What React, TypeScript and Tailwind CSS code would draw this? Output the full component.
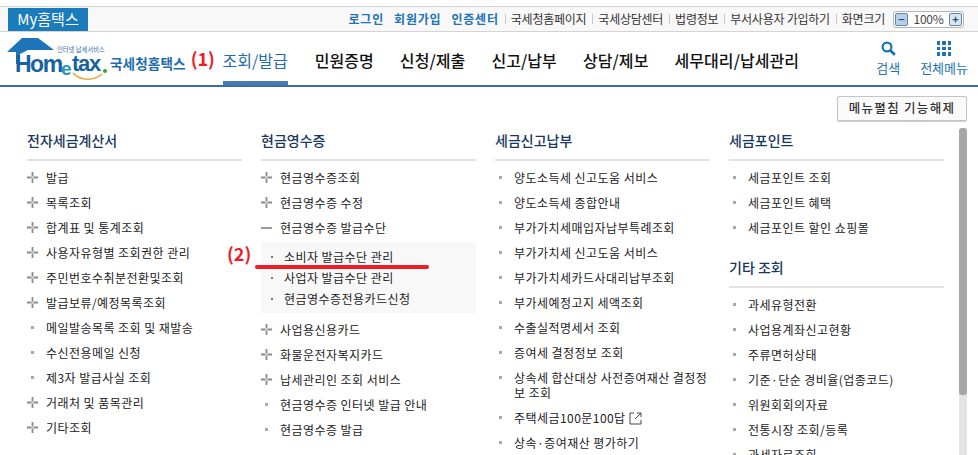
import { Fragment } from 'react';

type Item = { label: string; icon?: 'plus' | 'minus' | 'dot'; external?: boolean };

const col1: Item[] = [
  { label: '발급', icon: 'plus' },
  { label: '목록조회', icon: 'plus' },
  { label: '합계표 및 통계조회', icon: 'plus' },
  { label: '사용자유형별 조회권한 관리', icon: 'plus' },
  { label: '주민번호수취분전환및조회', icon: 'plus' },
  { label: '발급보류/예정목록조회', icon: 'plus' },
  { label: '메일발송목록 조회 및 재발송' },
  { label: '수신전용메일 신청' },
  { label: '제3자 발급사실 조회' },
  { label: '거래처 및 품목관리', icon: 'plus' },
  { label: '기타조회', icon: 'plus' },
];

const col2Top: Item[] = [
  { label: '현금영수증조회', icon: 'plus' },
  { label: '현금영수증 수정', icon: 'plus' },
  { label: '현금영수증 발급수단', icon: 'minus' },
];

const col2Sub = ['소비자 발급수단 관리', '사업자 발급수단 관리', '현금영수증전용카드신청'];

const col2Bottom: Item[] = [
  { label: '사업용신용카드', icon: 'plus' },
  { label: '화물운전자복지카드', icon: 'plus' },
  { label: '납세관리인 조회 서비스', icon: 'plus' },
  { label: '현금영수증 인터넷 발급 안내' },
  { label: '현금영수증 발급' },
];

const col3: Item[] = [
  { label: '양도소득세 신고도움 서비스' },
  { label: '양도소득세 종합안내' },
  { label: '부가가치세매입자납부특례조회' },
  { label: '부가가치세 신고도움 서비스' },
  { label: '부가가치세카드사대리납부조회' },
  { label: '부가세예정고지 세액조회' },
  { label: '수출실적명세서 조회' },
  { label: '증여세 결정정보 조회' },
  { label: '상속세 합산대상 사전증여재산 결정정보 조회' },
  { label: '주택세금100문100답', external: true },
  { label: '상속·증여재산 평가하기' },
];

const col4a: Item[] = [
  { label: '세금포인트 조회' },
  { label: '세금포인트 혜택' },
  { label: '세금포인트 할인 쇼핑몰' },
];

const col4b: Item[] = [
  { label: '과세유형전환' },
  { label: '사업용계좌신고현황' },
  { label: '주류면허상태' },
  { label: '기준·단순 경비율(업종코드)' },
  { label: '위원회회의자료' },
  { label: '전통시장 조회/등록' },
  { label: '과세자료조회' },
];

const navTabs = ['민원증명', '신청/제출', '신고/납부', '상담/제보', '세무대리/납세관리'];

function ItemIcon({ icon }: { icon?: Item['icon'] }) {
  if (icon === 'plus') {
    return (
      <svg width="11" height="11" viewBox="0 0 11 11" className="shrink-0">
        <path d="M4.6 0h1.8v4H4.6zM4.6 7h1.8v4H4.6zM0 4.6h4v1.8H0zM7 4.6h4v1.8H7z" fill="#8a8a8a" />
        <rect x="4" y="4" width="3" height="3" fill="#c9c9c9" />
      </svg>
    );
  }
  if (icon === 'minus') {
    return <span className="block h-[2px] w-[11px] shrink-0 bg-[#9a9a9a]" />;
  }
  return (
    <span className="flex w-[11px] shrink-0 justify-center">
      <span className="block h-[3px] w-[3px] bg-[#a8a8a8]" />
    </span>
  );
}

function MenuRow({ item }: { item: Item }) {
  return (
    <li className="flex items-start gap-2 py-[5px] leading-[15px] text-[#222]">
      <span className="flex h-[15px] items-center">
        <ItemIcon icon={item.icon} />
      </span>
      <span>
        {item.label}
        {item.external && (
          <svg width="13" height="13" viewBox="0 0 13 13" className="ml-[3px] inline-block align-[-2px]">
            <path d="M5 1H1v11h11V8M8 1h4v4M12 1 6 7" fill="none" stroke="#444" strokeWidth="1" />
          </svg>
        )}
      </span>
    </li>
  );
}

function Title({ children }: { children: string }) {
  return (
    <h3 className="h-[33px] border-b-2 border-[#e2e2e2] pt-[2px] text-[14px] leading-[20px] font-medium tracking-normal text-[#17375e]">
      {children}
    </h3>
  );
}

function Logo() {
  return (
    <div className="relative h-[50px] w-[103px] shrink-0">
      <svg width="50" height="26" viewBox="0 0 50 26" className="absolute top-[6px] left-0">
        <path d="M0 14 15 0h16l16 12H21L13 16v10H9V14z" fill="#1f74b8" />
      </svg>
      <span className="absolute top-[23px] left-[8px] font-['Liberation_Sans',sans-serif] text-[23px] leading-[18px] font-bold tracking-[-1.5px] text-[#17639f]">
        Hom
      </span>
      <span className="absolute top-[29px] left-[54px] font-['Liberation_Sans',sans-serif] text-[19px] leading-[16px] font-bold text-[#2a93c4]">
        e
      </span>
      <span className="absolute top-[23px] left-[65px] font-['Liberation_Sans',sans-serif] text-[22px] leading-[18px] font-bold tracking-[-1.3px] text-[#17639f]">
        tax
      </span>
      <span className="absolute top-[37px] left-[96px] block h-[4px] w-[4px] rounded-full bg-[#3aa535]" />
      <svg width="32" height="9" viewBox="0 0 32 9" className="absolute top-[40px] left-[65px]">
        <path d="M1 1c7 8 21 8 29 1" fill="none" stroke="#f0a030" strokeWidth="1.5" />
      </svg>
      <span className="absolute top-[13px] left-[50px] text-[6.3px] leading-[9px] whitespace-nowrap text-[#3a6fa8]">
        인터넷 납세서비스
      </span>
    </div>
  );
}

export default function App() {
  return (
    <div className="relative h-[455px] w-[978px] overflow-hidden bg-white font-['Noto_Sans_CJK_KR','Noto_Sans',sans-serif] text-[12px]">
      {/* top utility bar */}
      <div className="mt-[6px] flex h-[26px] items-end border-y border-[#d3d3d3] bg-[#f8f8f8] pr-[14px] pl-[8px]">
        <a className="flex h-[23px] w-[80px] items-center justify-center bg-[#1a7bbd] text-[15px] text-white">My홈택스</a>
        <div className="mb-[3px] ml-auto flex items-center text-[#333]">
          <span className="mr-[10px] font-bold tracking-[0.8px] text-[#1d73b5]">로그인</span>
          <span className="mr-[10px] font-bold tracking-[0.8px] text-[#1d73b5]">회원가입</span>
          <span className="mr-[6px] font-bold tracking-[0.8px] text-[#1d73b5]">인증센터</span>
          {['국세청홈페이지', '국세상담센터', '법령정보', '부서사용자 가입하기', '화면크기'].map((t) => (
            <Fragment key={t}>
              <span className="mr-[5px] h-[10px] w-px bg-[#c8c8c8]" />
              <span className="mr-[6px] tracking-[-0.25px] text-[#333]">{t}</span>
            </Fragment>
          ))}
          <div className="ml-[2px] flex h-[17px] w-[71px] items-center justify-between rounded-[3px] border border-[#b5b5b5] bg-white px-[1px]">
            <button className="flex h-[13px] w-[13px] items-center justify-center rounded-[2px] border border-[#5d87b0] bg-[#b9cfe3] text-[11px] leading-none font-bold text-[#26527c]">−</button>
            <span className="text-[12px] tracking-[-0.3px] text-[#444]">100%</span>
            <button className="flex h-[13px] w-[13px] items-center justify-center rounded-[2px] border border-[#5d87b0] bg-[#dbe6f0] text-[11px] leading-none font-bold text-[#26527c]">+</button>
          </div>
        </div>
      </div>

      {/* main nav */}
      <div className="flex h-[55px] items-stretch border-b-2 border-[#3a6ea5] pr-[10px] pl-[7px]">
        <Logo />
        <span className="mt-[22px] text-[13.6px] leading-[18px] font-semibold tracking-[0.1px] whitespace-nowrap text-[#1f6cad]">국세청홈택스</span>
        <span className="mt-[15px] ml-[5px] w-[32px] text-[18px] leading-[22px] font-bold text-[#ee1c25]">(1)</span>
        <div className="flex h-full w-[65px] items-start justify-center border-b-4 border-[#4a7bb0] pt-[17px] text-[16px] leading-[22px] whitespace-nowrap text-[#1f6cad]">
          조회/발급
        </div>
        <div className="ml-[27px] flex gap-[26px] pt-[17px] text-[16px] leading-[22px] font-medium tracking-[0.08px] whitespace-nowrap text-[#111]">
          {navTabs.map((t) => (
            <span key={t}>{t}</span>
          ))}
        </div>
        <div className="ml-auto flex gap-[20px] pt-[9px] text-[13px] leading-[16px] text-[#1d73b5]">
          <div className="flex flex-col items-center gap-[4px]">
            <svg width="15" height="15" viewBox="0 0 15 15">
              <circle cx="6" cy="6" r="4.4" fill="none" stroke="#1d73b5" strokeWidth="2.2" />
              <path d="m9.4 9.4 4.4 4.4" stroke="#1d73b5" strokeWidth="2.8" />
            </svg>
            <span>검색</span>
          </div>
          <div className="flex flex-col items-center gap-[4px]">
            <div className="grid h-[15px] w-[14px] grid-cols-3 gap-[2px]">
              {Array.from({ length: 9 }).map((_, i) => (
                <span key={i} className="block bg-[#1d73b5]" />
              ))}
            </div>
            <span>전체메뉴</span>
          </div>
        </div>
      </div>

      {/* body */}
      <div className="flex justify-end pt-[9px] pr-[11px]">
        <button className="flex h-[25px] w-[130px] items-center justify-center rounded-[2px] border border-[#c4c4c4] bg-[#fafafa] text-[12.5px] font-medium tracking-[1.3px] text-[#333] shadow-[0_1px_1px_rgba(0,0,0,0.2)]">
          메뉴펼침 기능해제
        </button>
      </div>
      <div className="flex pt-[7px]">
        <div className="grid flex-1 grid-cols-[234px_234px_234px_215px] pl-[27px] tracking-[0.45px]">
          <div className="pr-[19px]">
            <Title>전자세금계산서</Title>
            <ul className="mt-[4px]">
              {col1.map((it) => (
                <MenuRow key={it.label} item={it} />
              ))}
            </ul>
          </div>
          <div className="pr-[19px]">
            <Title>현금영수증</Title>
            <ul className="mt-[4px]">
              {col2Top.map((it) => (
                <MenuRow key={it.label} item={it} />
              ))}
              <li className="mt-[2px] mb-[4px] bg-[#f8f8f8] py-[4px] pl-[10px] leading-[21px] text-[#222]">
                {col2Sub.map((s) => (
                  <div key={s} className="flex items-center gap-[11px]">
                    <span className="block h-[2px] w-[2px] shrink-0 bg-[#777]" />
                    <span>{s}</span>
                  </div>
                ))}
              </li>
              {col2Bottom.map((it) => (
                <MenuRow key={it.label} item={it} />
              ))}
            </ul>
          </div>
          <div className="pr-[19px]">
            <Title>세금신고납부</Title>
            <ul className="mt-[4px]">
              {col3.map((it) => (
                <MenuRow key={it.label} item={it} />
              ))}
            </ul>
          </div>
          <div>
            <Title>세금포인트</Title>
            <ul className="mt-[4px]">
              {col4a.map((it) => (
                <MenuRow key={it.label} item={it} />
              ))}
            </ul>
            <div className="mt-[15px]">
              <Title>기타 조회</Title>
            </div>
            <ul className="mt-[4px]">
              {col4b.map((it) => (
                <MenuRow key={it.label} item={it} />
              ))}
            </ul>
          </div>
        </div>
      </div>

      {/* scrollbar */}
      <div className="absolute top-[128px] right-[11px] bottom-0 w-[8px] rounded-t-[3px] bg-[#e3e3e3]">
        <div className="h-[267px] rounded-[3px] bg-[#a6a6a6]" />
      </div>

      {/* red annotation over the list */}
      <span className="absolute top-[243px] left-[227px] text-[18px] leading-[20px] font-bold text-[#ee1c25]">(2)</span>
      <span className="absolute top-[265px] left-[255px] block h-[4px] w-[174px] rounded-full bg-[#ee1c25]" />
    </div>
  );
}
